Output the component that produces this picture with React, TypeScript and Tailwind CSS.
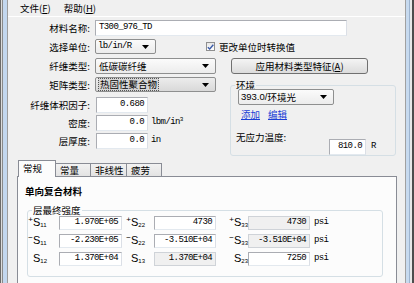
import React from 'react';

const mono = "font-['Liberation_Mono',monospace] text-[9px] tracking-[-0.6px] text-black";
const sans = "font-['Liberation_Sans',Arial,sans-serif]";

function Label({ children, w = 'w-[82px]' }: { children: React.ReactNode; w?: string }) {
  return <div className={`${w} shrink-0 text-right text-[9.5px] leading-[12px]`}>{children}</div>;
}

function TextBox({
  value,
  className = '',
  left,
  disabled,
}: {
  value: string;
  className?: string;
  left?: boolean;
  disabled?: boolean;
}) {
  return (
    <div
      className={`flex h-full shrink-0 items-center border ${
        left ? 'justify-start pl-[3px]' : 'justify-end pr-[3px]'
      } ${
        disabled
          ? 'border-[#cfd3d8] bg-[#f0f0f0]'
          : 'border-[#abadb3] border-b-[#e3e9ef] border-r-[#dbdfe6] bg-white'
      } ${className}`}
    >
      <span className={mono}>{value}</span>
    </div>
  );
}

function Arrow() {
  return (
    <svg width="7" height="4" viewBox="0 0 7 4" className="shrink-0">
      <path d="M0 0h7L3.5 4z" fill="#000" />
    </svg>
  );
}

function Combo({
  children,
  className = '',
  gray,
}: {
  children: React.ReactNode;
  className?: string;
  gray?: boolean;
}) {
  return (
    <div
      className={`flex h-full shrink-0 items-center rounded-[2px] border border-[#8e8f8f] pr-[6px] pl-[2px] ${
        gray ? 'bg-gradient-to-b from-[#ececec] to-[#d9d9d9]' : 'bg-gradient-to-b from-[#fbfbfb] to-[#ececec]'
      } ${className}`}
    >
      <div className="flex min-w-0 flex-1 items-center">{children}</div>
      <Arrow />
    </div>
  );
}

function SLabel({ pre, sub, className = '' }: { pre?: string; sub: string; className?: string }) {
  return (
    <div className={`flex h-full shrink-0 items-start ${sans} ${className}`}>
      <span className="w-[5px] text-center text-[8px] leading-[8px]">{pre}</span>
      <span className="text-[11px] leading-[12px]">
        S<span className="relative top-[1px] text-[6px]">{sub}</span>
      </span>
    </div>
  );
}

function Tab({ label, active, w }: { label: string; active?: boolean; w: string }) {
  return (
    <div
      className={`-ml-px flex items-start border border-b-0 border-[#898c95] pl-[4px] text-[9.5px] leading-[12px] ${w} ${
        active
          ? 'relative z-10 -mb-px h-[17px] bg-[#fcfcfc] pt-[1px]'
          : 'h-[13px] bg-gradient-to-b from-[#f2f2f2] to-[#e3e3e3]'
      }`}
    >
      {label}
    </div>
  );
}

const rows = [
  { p: '+', a: '1.970E+05', b: '4730', c: '4730', s: ['11', '22', '33'], bd: false, cd: true },
  { p: '−', a: '-2.230E+05', b: '-3.510E+04', c: '-3.510E+04', s: ['11', '22', '33'], bd: false, cd: true },
  { p: '', a: '1.370E+04', b: '1.370E+04', c: '7250', s: ['12', '13', '23'], bd: true, cd: false },
];

export default function App() {
  return (
    <div className="flex h-[283px] w-[414px] overflow-hidden bg-[#f0f0f0] font-['Noto_Sans_CJK_SC',sans-serif] text-black">
      {/* left window frame */}
      <div className="flex h-full shrink-0">
        <div className="w-px bg-[#6b6b6b]" />
        <div className="w-px bg-[#dcdcdc]" />
        <div className="w-px bg-[#8a8a8a]" />
        <div className="w-[4px] bg-[#c3d7ee]" />
        <div className="w-px bg-[#9c9c9c]" />
      </div>

      <div className="flex h-full w-[397px] shrink-0 flex-col">
        {/* menu */}
        <div className="flex h-[17px] shrink-0 items-center border-b border-white text-[9.5px] leading-[12px]">
          <span className="ml-[12px]">
            文件(<span className="underline">F</span>)
          </span>
          <span className="ml-[13px]">
            帮助(<span className="underline">H</span>)
          </span>
        </div>

        {/* name */}
        <div className="mt-[3px] flex h-[16px] items-center">
          <Label>材料名称:</Label>
          <TextBox value="T300_976_TD" left className="ml-[5px] w-[252px]" />
        </div>

        {/* units */}
        <div className="mt-[3px] flex h-[15px] items-center">
          <Label>选择单位:</Label>
          <Combo className="ml-[5px] w-[61px]">
            <span className={mono}>lb/in/R</span>
          </Combo>
          <div className="ml-[50px] flex h-[9px] w-[9px] items-center justify-center border border-[#8f8f8f] bg-gradient-to-b from-[#e6e6e6] to-white">
            <svg width="7" height="6" viewBox="0 0 7 6">
              <path d="M0.8 3.2 2.7 5 6.3 0.8" fill="none" stroke="#3b5ba8" strokeWidth="1.4" />
            </svg>
          </div>
          <span className="ml-[4px] text-[9.5px] leading-[12px]">更改单位时转换值</span>
        </div>

        <div className="mt-[4px] flex items-start">
          {/* left column */}
          <div className="flex w-[222px] shrink-0 flex-col">
            <div className="flex h-[16px] items-center">
              <Label>纤维类型:</Label>
              <Combo className="ml-[5px] w-[121px]">
                <span className="pl-[1px] text-[9.5px] leading-[12px]">低碳碳纤维</span>
              </Combo>
            </div>
            <div className="mt-[3px] flex h-[15px] items-center">
              <Label>矩阵类型:</Label>
              <Combo className="ml-[5px] w-[121px]" gray>
                <span className="border border-dotted border-[#555] bg-[#d6d6d6] px-px text-[9.5px] leading-[11px]">
                  热固性聚合物
                </span>
              </Combo>
            </div>
            <div className="mt-[5px] flex h-[16px] items-center">
              <Label>纤维体积因子:</Label>
              <TextBox value="0.680" className="ml-[6px] w-[52px]" />
            </div>
            <div className="mt-[2px] flex h-[16px] items-center">
              <Label>密度:</Label>
              <TextBox value="0.0" className="ml-[6px] w-[52px]" />
              <span className={`ml-[3px] ${mono}`}>
                lbm/in<sup className="text-[6px]">3</sup>
              </span>
            </div>
            <div className="mt-[2px] flex h-[16px] items-center">
              <Label>层厚度:</Label>
              <TextBox value="0.0" className="ml-[6px] w-[52px]" />
              <span className={`ml-[3px] ${mono}`}>in</span>
            </div>
          </div>

          {/* right column */}
          <div className="flex w-[166px] shrink-0 flex-col">
            <div className="ml-[1px] flex h-[16px] w-[137px] items-center justify-center rounded-[3px] border border-[#707070] bg-gradient-to-b from-[#f4f4f4] to-[#dcdcdc] text-[9.5px] leading-[12px]">
              应用材料类型特征(<span className="underline">A</span>)
            </div>
            <fieldset className="mt-[5px] h-[77px] rounded-[3px] border border-[#d5dfe5]">
              <legend className="ml-[4px] px-px text-[9.5px] leading-[12px]">环境</legend>
              <div className="-mt-[2px] ml-[7px] flex h-[16px]">
                <Combo className="w-[96px]">
                  <span className={`${sans} text-[9.5px] leading-[12px]`}>393.0/</span>
                  <span className="text-[9.5px] leading-[12px]">环境光</span>
                </Combo>
              </div>
              <div className="mt-[3px] ml-[10px] flex text-[9.5px] leading-[12px] text-[#1c3fd6]">
                <span className="underline">添加</span>
                <span className="ml-[8px] underline">编辑</span>
              </div>
              <div className="mt-[11px] ml-[5px] text-[9.5px] leading-[12px]">无应力温度:</div>
              <div className="-mt-[4px] flex h-[16px] items-center">
                <TextBox value="810.0" className="ml-[98px] w-[37px]" />
                <span className={`ml-[5px] ${mono}`}>R</span>
              </div>
            </fieldset>
          </div>
        </div>

        {/* tabs */}
        <div className="mt-[4px] flex h-[16px] shrink-0 items-end pl-[11px]">
          <Tab label="常规" active w="w-[38px]" />
          <Tab label="常量" w="w-[36px]" />
          <Tab label="非线性" w="w-[37px]" />
          <Tab label="疲劳" w="w-[36px]" />
        </div>
        <div className="ml-[9px] w-[380px] flex-1 border border-b-0 border-[#898c95] bg-[#fcfcfc]">
          <div className="pt-[8px] pl-[7px] text-[9.5px] leading-[12px] font-bold">单向复合材料</div>
          <fieldset className="mt-[7px] ml-[9px] w-[356px] rounded-[3px] border border-[#d5dfe5] pb-[10px]">
            <legend className="ml-[4px] px-px text-[9.5px] leading-[12px]">层最终强度</legend>
            <div className="flex flex-col gap-[4px]">
              {rows.map((r, i) => (
                <div key={i} className="flex h-[14px] items-center">
                  <SLabel pre={r.p} sub={r.s[0]} className="w-[31px]" />
                  <TextBox value={r.a} className="w-[63px]" />
                  <SLabel pre={r.p} sub={r.s[1]} className="w-[32px] pl-[4px]" />
                  <TextBox value={r.b} disabled={r.bd} className="w-[62px]" />
                  <SLabel pre={r.p} sub={r.s[2]} className="w-[32px] pl-[13px]" />
                  <TextBox value={r.c} disabled={r.cd} className="w-[62px]" />
                  <span className={`ml-[4px] ${mono}`}>psi</span>
                </div>
              ))}
            </div>
          </fieldset>
        </div>
      </div>

      {/* right window frame */}
      <div className="flex h-full shrink-0">
        <div className="w-px bg-[#a0a0a0]" />
        <div className="w-[3px] bg-[#c7daef]" />
        <div className="w-px bg-[#9db4cf]" />
        <div className="w-[2px] bg-[#e8e8e8]" />
        <div className="w-[2px] bg-[#4d4d4d]" />
      </div>
    </div>
  );
}
